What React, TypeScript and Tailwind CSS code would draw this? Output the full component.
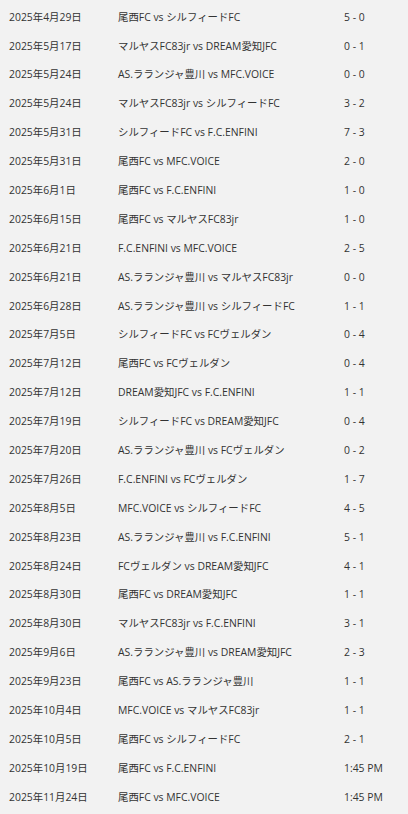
const matches: [string, string, string][] = [
  ['2025年4月29日', '尾西FC vs シルフィードFC', '5 - 0'],
  ['2025年5月17日', 'マルヤスFC83jr vs DREAM愛知JFC', '0 - 1'],
  ['2025年5月24日', 'AS.ラランジャ豊川 vs MFC.VOICE', '0 - 0'],
  ['2025年5月24日', 'マルヤスFC83jr vs シルフィードFC', '3 - 2'],
  ['2025年5月31日', 'シルフィードFC vs F.C.ENFINI', '7 - 3'],
  ['2025年5月31日', '尾西FC vs MFC.VOICE', '2 - 0'],
  ['2025年6月1日', '尾西FC vs F.C.ENFINI', '1 - 0'],
  ['2025年6月15日', '尾西FC vs マルヤスFC83jr', '1 - 0'],
  ['2025年6月21日', 'F.C.ENFINI vs MFC.VOICE', '2 - 5'],
  ['2025年6月21日', 'AS.ラランジャ豊川 vs マルヤスFC83jr', '0 - 0'],
  ['2025年6月28日', 'AS.ラランジャ豊川 vs シルフィードFC', '1 - 1'],
  ['2025年7月5日', 'シルフィードFC vs FCヴェルダン', '0 - 4'],
  ['2025年7月12日', '尾西FC vs FCヴェルダン', '0 - 4'],
  ['2025年7月12日', 'DREAM愛知JFC vs F.C.ENFINI', '1 - 1'],
  ['2025年7月19日', 'シルフィードFC vs DREAM愛知JFC', '0 - 4'],
  ['2025年7月20日', 'AS.ラランジャ豊川 vs FCヴェルダン', '0 - 2'],
  ['2025年7月26日', 'F.C.ENFINI vs FCヴェルダン', '1 - 7'],
  ['2025年8月5日', 'MFC.VOICE vs シルフィードFC', '4 - 5'],
  ['2025年8月23日', 'AS.ラランジャ豊川 vs F.C.ENFINI', '5 - 1'],
  ['2025年8月24日', 'FCヴェルダン vs DREAM愛知JFC', '4 - 1'],
  ['2025年8月30日', '尾西FC vs DREAM愛知JFC', '1 - 1'],
  ['2025年8月30日', 'マルヤスFC83jr vs F.C.ENFINI', '3 - 1'],
  ['2025年9月6日', 'AS.ラランジャ豊川 vs DREAM愛知JFC', '2 - 3'],
  ['2025年9月23日', '尾西FC vs AS.ラランジャ豊川', '1 - 1'],
  ['2025年10月4日', 'MFC.VOICE vs マルヤスFC83jr', '1 - 1'],
  ['2025年10月5日', '尾西FC vs シルフィードFC', '2 - 1'],
  ['2025年10月19日', '尾西FC vs F.C.ENFINI', '1:45 PM'],
  ['2025年11月24日', '尾西FC vs MFC.VOICE', '1:45 PM'],
];

export default function App() {
  return (
    <div className="min-h-[814px] w-[408px] bg-[#f2f2f2] pt-[3px] font-['Open_Sans','Noto_Sans_CJK_JP',sans-serif] text-[10.4px] text-[#333333]">
      {matches.map(([date, teams, result], i) => (
        <div
          key={i}
          className="grid h-[28.9px] grid-cols-[109px_226px_1fr] items-center px-[9px]"
        >
          <div className="whitespace-nowrap">{date}</div>
          <div className="whitespace-nowrap">{teams}</div>
          <div className="whitespace-nowrap">{result}</div>
        </div>
      ))}
    </div>
  );
}
